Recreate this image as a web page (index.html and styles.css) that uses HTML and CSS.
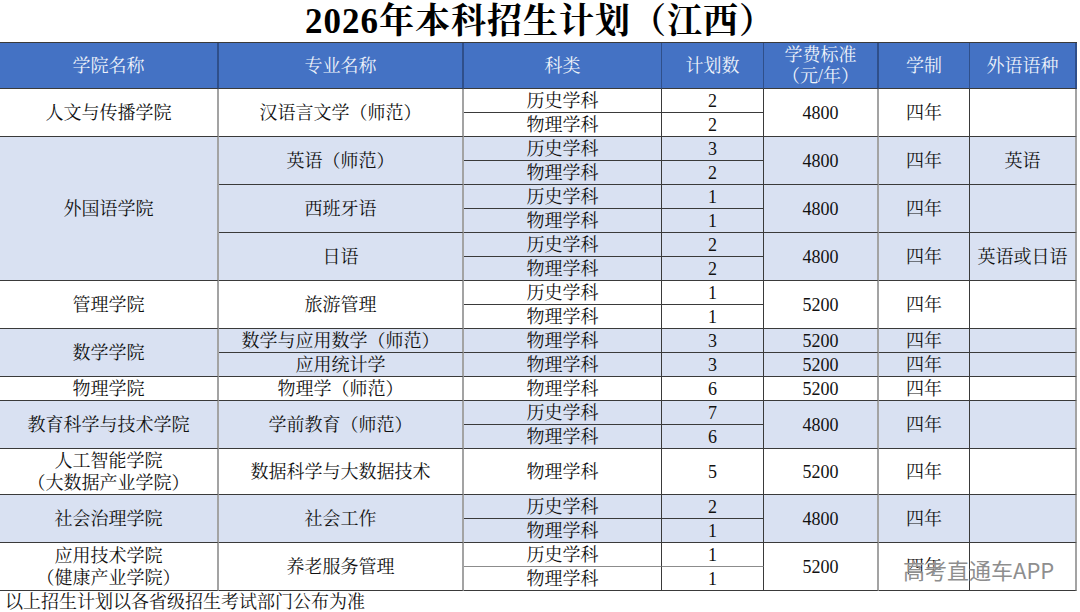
FILE: index.html
```html
<!DOCTYPE html>
<html lang="zh-CN">
<head>
<meta charset="utf-8">
<title>2026年本科招生计划（江西）</title>
<link rel="stylesheet" href="styles.css">
</head>
<body>
<div class="page">
  <h1 class="title">2026年本科招生计划（江西）</h1>
  <div class="plan">
    <div class="h c-college">学院名称</div>
    <div class="h c-major">专业名称</div>
    <div class="h c-type">科类</div>
    <div class="h c-num">计划数</div>
    <div class="h c-fee two">学费标准<br>（元/年）</div>
    <div class="h c-len">学制</div>
    <div class="h c-lang">外语语种</div>

    <!-- 人文与传播学院 -->
    <div class="c c-college s2">人文与传播学院</div>
    <div class="c c-major s2">汉语言文学（师范）</div>
    <div class="c c-type">历史学科</div>
    <div class="c c-num">2</div>
    <div class="c c-fee s2">4800</div>
    <div class="c c-len s2">四年</div>
    <div class="c c-lang s2"></div>
    <div class="c c-type">物理学科</div>
    <div class="c c-num">2</div>

    <!-- 外国语学院 -->
    <div class="c c-college s6 b">外国语学院</div>
    <div class="c c-major s2 b">英语（师范）</div>
    <div class="c c-type b">历史学科</div>
    <div class="c c-num b">3</div>
    <div class="c c-fee s2 b">4800</div>
    <div class="c c-len s2 b">四年</div>
    <div class="c c-lang s2 b">英语</div>
    <div class="c c-type b">物理学科</div>
    <div class="c c-num b">2</div>
    <div class="c c-major s2 b">西班牙语</div>
    <div class="c c-type b">历史学科</div>
    <div class="c c-num b">1</div>
    <div class="c c-fee s2 b">4800</div>
    <div class="c c-len s2 b">四年</div>
    <div class="c c-lang s2 b"></div>
    <div class="c c-type b">物理学科</div>
    <div class="c c-num b">1</div>
    <div class="c c-major s2 b">日语</div>
    <div class="c c-type b">历史学科</div>
    <div class="c c-num b">2</div>
    <div class="c c-fee s2 b">4800</div>
    <div class="c c-len s2 b">四年</div>
    <div class="c c-lang s2 b">英语或日语</div>
    <div class="c c-type b">物理学科</div>
    <div class="c c-num b">2</div>

    <!-- 管理学院 -->
    <div class="c c-college s2">管理学院</div>
    <div class="c c-major s2">旅游管理</div>
    <div class="c c-type">历史学科</div>
    <div class="c c-num">1</div>
    <div class="c c-fee s2">5200</div>
    <div class="c c-len s2">四年</div>
    <div class="c c-lang s2"></div>
    <div class="c c-type">物理学科</div>
    <div class="c c-num">1</div>

    <!-- 数学学院 -->
    <div class="c c-college s2 b">数学学院</div>
    <div class="c c-major b">数学与应用数学（师范）</div>
    <div class="c c-type b">物理学科</div>
    <div class="c c-num b">3</div>
    <div class="c c-fee b">5200</div>
    <div class="c c-len b">四年</div>
    <div class="c c-lang b"></div>
    <div class="c c-major b">应用统计学</div>
    <div class="c c-type b">物理学科</div>
    <div class="c c-num b">3</div>
    <div class="c c-fee b">5200</div>
    <div class="c c-len b">四年</div>
    <div class="c c-lang b"></div>

    <!-- 物理学院 -->
    <div class="c c-college">物理学院</div>
    <div class="c c-major">物理学（师范）</div>
    <div class="c c-type">物理学科</div>
    <div class="c c-num">6</div>
    <div class="c c-fee">5200</div>
    <div class="c c-len">四年</div>
    <div class="c c-lang"></div>

    <!-- 教育科学与技术学院 -->
    <div class="c c-college s2 b">教育科学与技术学院</div>
    <div class="c c-major s2 b">学前教育（师范）</div>
    <div class="c c-type b">历史学科</div>
    <div class="c c-num b">7</div>
    <div class="c c-fee s2 b">4800</div>
    <div class="c c-len s2 b">四年</div>
    <div class="c c-lang s2 b"></div>
    <div class="c c-type b">物理学科</div>
    <div class="c c-num b">6</div>

    <!-- 人工智能学院 -->
    <div class="c c-college s2 two">人工智能学院<br>（大数据产业学院）</div>
    <div class="c c-major s2">数据科学与大数据技术</div>
    <div class="c c-type s2">物理学科</div>
    <div class="c c-num s2">5</div>
    <div class="c c-fee s2">5200</div>
    <div class="c c-len s2">四年</div>
    <div class="c c-lang s2"></div>

    <!-- 社会治理学院 -->
    <div class="c c-college s2 b">社会治理学院</div>
    <div class="c c-major s2 b">社会工作</div>
    <div class="c c-type b">历史学科</div>
    <div class="c c-num b">2</div>
    <div class="c c-fee s2 b">4800</div>
    <div class="c c-len s2 b">四年</div>
    <div class="c c-lang s2 b"></div>
    <div class="c c-type b">物理学科</div>
    <div class="c c-num b">1</div>

    <!-- 应用技术学院 -->
    <div class="c c-college s2 two">应用技术学院<br>（健康产业学院）</div>
    <div class="c c-major s2">养老服务管理</div>
    <div class="c c-type soft">历史学科</div>
    <div class="c c-num soft">1</div>
    <div class="c c-fee s2">5200</div>
    <div class="c c-len s2">四年</div>
    <div class="c c-lang s2"></div>
    <div class="c c-type">物理学科</div>
    <div class="c c-num">1</div>

    <div class="watermark">高考直通车APP</div>
  </div>
  <p class="note">以上招生计划以各省级招生考试部门公布为准</p>
</div>
</body>
</html>
```

FILE: styles.css
```css
* { box-sizing: border-box; }

html, body {
  margin: 0;
  padding: 0;
  background: #ffffff;
}

body {
  font-family: "Liberation Serif", "Noto Serif CJK SC", "Noto Sans CJK SC", serif;
  color: #111111;
}

.page {
  width: 1080px;
  height: 612px;
  overflow: hidden;
}

.title {
  margin: 0;
  height: 42px;
  line-height: 44px;
  text-align: center;
  font-size: 35px;
  font-weight: 700;
  color: #000000;
  letter-spacing: 1px;
}

.plan {
  position: relative;
  width: 1077px;
  display: grid;
  grid-template-columns: 219px 245px 198px 102px 115px 91px 107px;
  grid-template-rows: 46px repeat(15, 24px) 23px 23px repeat(4, 24px);
  border-top: 1px solid #3a3a3a;
}

.h, .c {
  display: flex;
  align-items: center;
  justify-content: center;
  text-align: center;
  font-size: 18px;
  line-height: 22px;
  border-bottom: 1px solid #3a3a3a;
  border-right: 1px solid #3a3a3a;
  white-space: nowrap;
}

.h {
  background: #4472c4;
  color: #eef2fa;
  border-right-color: #2f4f8a;
}

.h.two { line-height: 21px; }

.c { background: #ffffff; }
.c.b { background: #d9e1f2; }

.s2 { grid-row: span 2; }
.s6 { grid-row: span 6; }

/* grey, heavier column rules */
.c.c-college, .c.c-major, .c.c-fee, .c.c-lang {
  border-right: 2px solid #a3a3a3;
}

.h.c-college, .h.c-major, .h.c-fee, .h.c-lang {
  border-right: 2px solid #2f4f8a;
}

.c.soft { border-bottom-color: #8c8c8c; }

.watermark {
  position: absolute;
  left: 903px;
  top: 512px;
  font-family: "Noto Sans CJK SC", "Noto Sans", sans-serif;
  font-size: 22px;
  line-height: 28px;
  color: #8e8e8e;
  text-shadow: 0 0 1px #ffffff;
  pointer-events: none;
}

.note {
  margin: 0;
  padding-left: 5px;
  font-size: 18px;
  line-height: 22px;
  color: #111111;
}
```
